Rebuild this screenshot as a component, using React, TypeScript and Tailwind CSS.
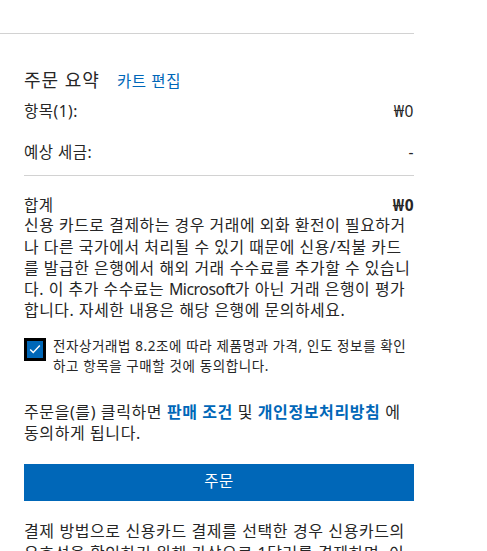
import React from "react";

const font = { fontFamily: '"Noto Sans", "Noto Sans CJK KR", sans-serif' };

function Row({ label, value, bold }: { label: string; value: string; bold?: boolean }) {
  return (
    <div className="flex justify-between text-[15.5px] leading-[20px] tracking-[0.5px]">
      <span>{label}</span>
      <span className={bold ? "font-bold" : ""}>{value}</span>
    </div>
  );
}

export default function App() {
  return (
    <div className="h-[551px] overflow-hidden bg-white text-[#262626]" style={font}>
      <div className="w-[414px] pt-[33px]">
        <div className="border-t border-[#d2d2d2]" />
        <div className="pl-6">
          <div className="mt-[34px] flex items-baseline gap-[17px]">
            <h2 className="text-[18px] leading-[24px] tracking-[1px]">주문 요약</h2>
            <a className="text-[15.5px] tracking-[0.6px] text-[#0067b8]" href="#">
              카트 편집
            </a>
          </div>

          <div className="mt-2">
            <Row label="항목(1):" value="₩0" />
          </div>
          <div className="mt-[21px]">
            <Row label="예상 세금:" value="-" />
          </div>

          <div className="mt-[13px] border-t border-[#d2d2d2]" />

          <div className="mt-[19px]">
            <Row label="합계" value="₩0" bold />
          </div>
          <p className="text-[15.9px] leading-[21.25px] tracking-[0.55px]">
            신용 카드로 결제하는 경우 거래에 외화 환전이 필요하거나 다른 국가에서 처리될 수 있기 때문에 신용/직불 카드를 발급한 은행에서 해외 거래 수수료를 추가할 수 있습니다. 이 추가 수수료는{" "}
            <span className="tracking-[-0.5px]">Microsoft</span>가 아닌 거래 은행이 평가합니다. 자세한 내용은 해당 은행에 문의하세요.
          </p>

          <label className="mt-[14px] flex items-start gap-[7px]">
            <span className="mt-[2px] flex h-[23px] w-[22px] shrink-0 items-center justify-center border-[3px] border-black bg-[#0067b8]">
              <svg width="14" height="14" viewBox="0 0 16 16" fill="none">
                <path d="M2.5 8.5l3.5 3.5 7.5-8" stroke="white" strokeWidth="1.6" />
              </svg>
            </span>
            <span className="text-[13.5px] leading-[20px] tracking-[0.6px]">
              전자상거래법 8.2조에 따라 제품명과 가격, 인도 정보를 확인하고 항목을 구매할 것에 동의합니다.
            </span>
          </label>

          <p className="mt-[26px] text-[16px] leading-[21px] tracking-[0.6px]">
            주문을(를) 클릭하면{" "}
            <a href="#" className="font-semibold text-[#0067b8]">
              판매 조건
            </a>{" "}
            및{" "}
            <a href="#" className="font-semibold text-[#0067b8]">
              개인정보처리방침
            </a>{" "}
            에 동의하게 됩니다.
          </p>

          <button className="mt-5 h-[37px] w-full bg-[#0067b8] text-[15.5px] tracking-[0.6px] text-white">
            주문
          </button>

          <p className="mt-[19px] text-[16px] leading-[22px] tracking-[0.6px]">
            결제 방법으로 신용카드 결제를 선택한 경우 신용카드의 유효성을 확인하기 위해 가상으로 1달러를 결제하며, 이 결제는 자동으로 취소됩니다.
          </p>
        </div>
      </div>
    </div>
  );
}
